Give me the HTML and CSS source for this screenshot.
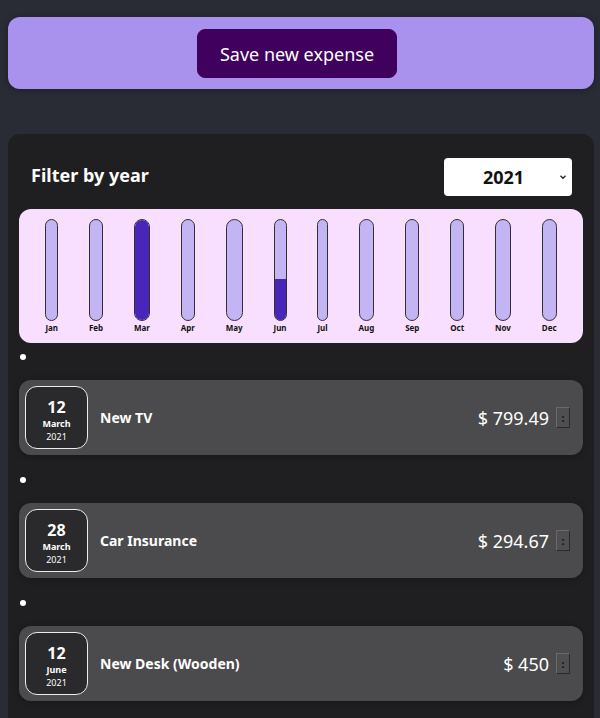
FILE: index.html
```html
<!DOCTYPE html>
<html>
<head>
<meta charset="utf-8">
<link rel="stylesheet" href="styles.css">
</head>
<body>
<div class="new-expense">
  <button class="save-btn">Save new expense</button>
</div>
<div class="expenses">
  <div class="filter">
    <span class="filter-label">Filter by year</span>
    <div class="select">
      <span class="select-value">2021</span>
      <svg class="caret" width="8" height="6" viewBox="0 0 8 6"><path d="M1.5 1.8 L4 4.3 L6.5 1.8" fill="none" stroke="#222" stroke-width="1.3"/></svg>
    </div>
  </div>
  <div class="chart">
    <div class="chart-bar"><div class="bar-inner"><div class="bar-fill" style="height:0%"></div></div><div class="bar-label">Jan</div></div>
    <div class="chart-bar"><div class="bar-inner"><div class="bar-fill" style="height:0%"></div></div><div class="bar-label">Feb</div></div>
    <div class="chart-bar"><div class="bar-inner"><div class="bar-fill" style="height:100%"></div></div><div class="bar-label">Mar</div></div>
    <div class="chart-bar"><div class="bar-inner"><div class="bar-fill" style="height:0%"></div></div><div class="bar-label">Apr</div></div>
    <div class="chart-bar"><div class="bar-inner"><div class="bar-fill" style="height:0%"></div></div><div class="bar-label">May</div></div>
    <div class="chart-bar"><div class="bar-inner"><div class="bar-fill" style="height:41%"></div></div><div class="bar-label">Jun</div></div>
    <div class="chart-bar"><div class="bar-inner"><div class="bar-fill" style="height:0%"></div></div><div class="bar-label">Jul</div></div>
    <div class="chart-bar"><div class="bar-inner"><div class="bar-fill" style="height:0%"></div></div><div class="bar-label">Aug</div></div>
    <div class="chart-bar"><div class="bar-inner"><div class="bar-fill" style="height:0%"></div></div><div class="bar-label">Sep</div></div>
    <div class="chart-bar"><div class="bar-inner"><div class="bar-fill" style="height:0%"></div></div><div class="bar-label">Oct</div></div>
    <div class="chart-bar"><div class="bar-inner"><div class="bar-fill" style="height:0%"></div></div><div class="bar-label">Nov</div></div>
    <div class="chart-bar"><div class="bar-inner"><div class="bar-fill" style="height:0%"></div></div><div class="bar-label">Dec</div></div>
  </div>
  <ul class="list">
    <li class="entry">
      <span class="bullet"></span>
      <div class="item">
        <div class="date"><div class="day">12</div><div class="month">March</div><div class="year">2021</div></div>
        <div class="title">New TV</div>
        <div class="price">$ 799.49</div>
        <button class="more">:</button>
      </div>
    </li>
    <li class="entry">
      <span class="bullet"></span>
      <div class="item">
        <div class="date"><div class="day">28</div><div class="month">March</div><div class="year">2021</div></div>
        <div class="title">Car Insurance</div>
        <div class="price">$ 294.67</div>
        <button class="more">:</button>
      </div>
    </li>
    <li class="entry">
      <span class="bullet"></span>
      <div class="item">
        <div class="date"><div class="day">12</div><div class="month">June</div><div class="year">2021</div></div>
        <div class="title">New Desk (Wooden)</div>
        <div class="price">$ 450</div>
        <button class="more">:</button>
      </div>
    </li>
  </ul>
</div>
</body>
</html>
```

FILE: styles.css
```css
* { box-sizing: border-box; }
html, body { margin: 0; padding: 0; }
body {
  background: #292c35;
  font-family: "Noto Sans", "Open Sans", sans-serif;
  height: 718px;
  overflow: hidden;
}
.new-expense {
  margin: 17px 6px 0 8px;
  height: 72px;
  background: #a892ee;
  border-radius: 12px;
  box-shadow: 0 1px 6px rgba(0,0,0,0.35);
  display: flex;
  justify-content: center;
  padding-top: 12px;
}
.save-btn {
  width: 200px;
  height: 49px;
  background: #40005d;
  border: 1px solid #40005d;
  border-radius: 8px;
  color: #fff;
  font-family: inherit;
  font-size: 18px;
  padding: 0;
  margin-left: -8px;
}
.expenses {
  margin: 45px 6px 0 8px;
  background: #1f1e20;
  border-radius: 12px;
  padding: 0 11px 0 11px;
  height: 600px;
}
.filter {
  display: flex;
  align-items: center;
  justify-content: space-between;
  padding: 24px 11px 0 12px;
}
.filter-label {
  color: #fff;
  font-weight: bold;
  font-size: 18px;
  margin-bottom: 4px;
}
.select {
  width: 128px;
  height: 38px;
  background: #fff;
  border-radius: 4px;
  display: flex;
  align-items: center;
}
.select-value {
  flex: 1;
  text-align: center;
  font-weight: bold;
  font-size: 18px;
  color: #111;
  padding-left: 4px;
}
.caret { margin-right: 5px; }
.chart {
  margin-top: 13px;
  height: 134px;
  background: #f8dfff;
  border-radius: 12px;
  display: flex;
  justify-content: space-around;
  padding: 10px 11px 10px 11px;
}
.chart-bar {
  display: flex;
  flex-direction: column;
  align-items: center;
  height: 100%;
}
.bar-inner {
  height: 103px;
  width: 100%;
  border: 1px solid #313131;
  border-radius: 12px;
  background: #c3b4f3;
  overflow: hidden;
  display: flex;
  flex-direction: column;
  justify-content: flex-end;
}
.bar-fill { background: #4826b9; width: 100%; }
.bar-label {
  font-weight: bold;
  font-size: 8px;
  color: #111;
  margin-top: 1px;
}
.list { list-style: none; margin: 0; padding: 0; }
.entry {
  display: flex;
  flex-direction: column;
  padding-top: 11px;
}
.entry + .entry { padding-top: 22px; }
.bullet {
  width: 6px;
  height: 6px;
  border-radius: 50%;
  background: #fff;
  margin-left: 1px;
}
.item {
  margin-top: 20px;
  height: 75px;
  background: #4b4a4c;
  border-radius: 12px;
  display: flex;
  align-items: center;
  padding: 0 13px 0 6px;
  box-shadow: 0 1px 6px rgba(0,0,0,0.25);
}
.date {
  width: 63px;
  height: 63px;
  background: #2a292b;
  border: 1px solid #ececec;
  border-radius: 12px;
  color: #fff;
  display: flex;
  flex-direction: column;
  align-items: center;
  justify-content: flex-start;
  padding-top: 9px;
}
.day { font-size: 16px; font-weight: bold; line-height: 22px; }
.month { font-size: 9px; font-weight: bold; line-height: 12.5px; }
.year { font-size: 9px; line-height: 12.5px; }
.title {
  flex: 1;
  margin-left: 12px;
  color: #fff;
  font-weight: bold;
  font-size: 14px;
}
.price {
  color: #fff;
  font-size: 18px;
  margin-right: 7px;
}
.more {
  width: 14px;
  height: 21px;
  padding: 0;
  background: #4f4e50;
  border: 1px solid;
  border-color: #6a6a6a #2a2a2a #2a2a2a #6a6a6a;
  color: #111;
  font-size: 11px;
  font-weight: bold;
  line-height: 17px;
  font-family: inherit;
}
```
